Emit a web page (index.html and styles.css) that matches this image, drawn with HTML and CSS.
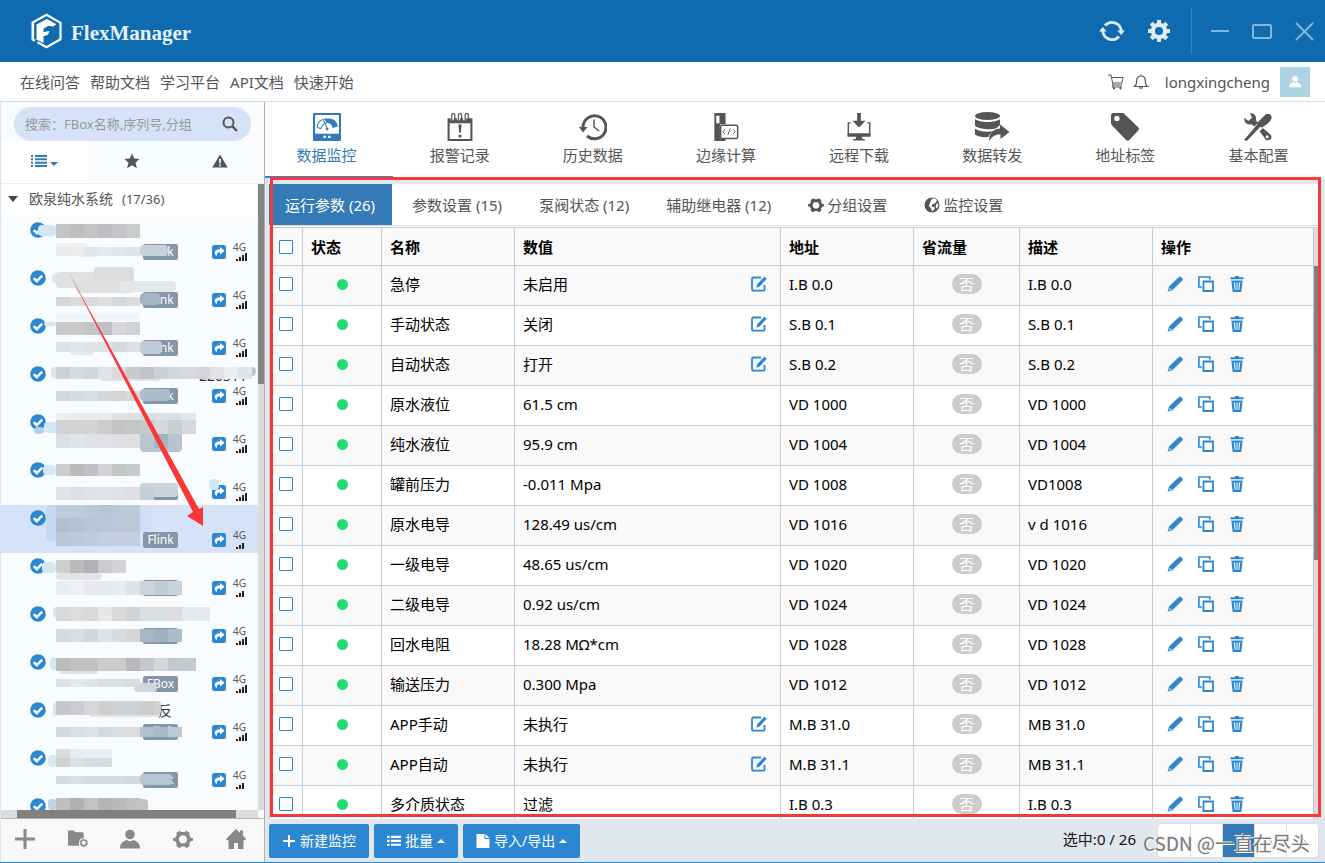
FILE: index.html
```
<!DOCTYPE html>
<html lang="zh-CN">
<head>
<meta charset="UTF-8">
<meta name="viewport" content="width=device-width, initial-scale=1.0">
<title>FlexManager</title>
<link rel="stylesheet" href="styles.css">
</head>
<body>

<!-- icon set -->
<svg class="sprite" aria-hidden="true">
  <symbol id="i-gear" viewBox="0 0 24 24"><path fill-rule="evenodd" d="M10 1h4v3l2 .8 2.300-2.100 2.900 2.900L19.200 8l.8 2h3v4h-3l-.8 2 2 2.300-2.900 2.900L16 19.200l-2 .8v3h-4v-3l-2-.8-2.300 2-2.900-2.900L4.800 16 4 14H1v-4h3l.8-2-2-2.400 2.900-2.900L8 4.800l2-.8zM12 8a4 4 0 1 0 0 8 4 4 0 0 0 0-8z"/></symbol>
  <symbol id="i-gear6" viewBox="0 0 24 24"><path fill-rule="evenodd" d="M8 2l2 1.500h4L16 2l4 2.500-.5 2.800 1.800 3.200L24 11v3l-2.700.8-1.800 3 .5 2.700-4 2.500-2-2h-4l-2 2-4-2.500.5-2.700-1.800-3L0 14v-3l2.700-.5 1.800-3.200L4 4.500zM12 7.500a5 5 0 1 0 0 10 5 5 0 0 0 0-10z"/></symbol>
  <symbol id="i-refresh" viewBox="0 0 26 24"><g fill="none" stroke="currentColor" stroke-width="2.800"><path d="M6 6.500A9.300 9.300 0 0 1 22.200 12"/><path d="M20 17.500A9.300 9.300 0 0 1 3.800 12"/></g><path d="M18.300 11.500H26L22.200 16zM0 12.500h7.700L3.800 8z"/></symbol>
  <symbol id="i-cart" viewBox="0 0 18 18"><path fill="none" stroke="currentColor" d="M1 2h3l2 10h9M4.500 4.500H16L15 10H6M6 12l-1 2h10"/><path fill="none" stroke="currentColor" d="M6.500 14.500h1v1.500h-1zM13 14.500h1v1.500h-1z"/></symbol>
  <symbol id="i-bell" viewBox="0 0 18 18"><path fill="none" stroke="currentColor" stroke-width="1.200" d="M2.500 13.500h13c-1.500-1.200-2.300-2.500-2.300-6.500 0-2.500-1.700-4-4.200-4S4.800 4.500 4.800 7c0 4-.8 5.300-2.300 6.500zM7.500 13.500c0 2.500 3 2.500 3 0M9 3V1.500"/></symbol>
  <symbol id="i-user" viewBox="0 0 20 20"><circle cx="10" cy="5.500" r="4.800"/><path d="M0 19.500c0-5 2-6.500 6.500-8.500 2 1.500 5 1.500 7 0 4.500 2 6.500 3.500 6.500 8.500z"/></symbol>
  <symbol id="i-search" viewBox="0 0 16 16"><circle cx="6.500" cy="6.500" r="5" fill="none" stroke="currentColor" stroke-width="2"/><path stroke="currentColor" stroke-width="2.400" d="M10 10l5 5"/></symbol>
  <symbol id="i-list" viewBox="0 0 16 12"><path d="M0 0h2v2H0zM4 0h12v2H4zM0 3.300h2v2H0zM4 3.300h12v2H4zM0 6.700h2v2H0zM4 6.700h12v2H4zM0 10h2v2H0zM4 10h12v2H4z"/></symbol>
  <symbol id="i-list3" viewBox="0 0 16 12"><path d="M0 0h3v2.500H0zM4.500 0H16v2.500H4.500zM0 4.500h3V7H0zM4.500 4.500H16V7H4.500zM0 9h3v2.500H0zM4.500 9H16v2.500H4.500z"/></symbol>
  <symbol id="i-star" viewBox="0 0 16 16"><path d="M8 .5l2.200 5 5.500.4-4.200 3.700 1.400 5.600L8 12.200l-4.900 3 1.400-5.600L.3 5.900l5.500-.4z"/></symbol>
  <symbol id="i-warn" viewBox="0 0 16 14"><path fill-rule="evenodd" d="M8 .5L15.700 13.500H.3zM7 5l.3 4.500h1.400L9 5zM7.200 10.500v1.700h1.600v-1.700z"/></symbol>
  <symbol id="i-meter" viewBox="0 0 27 27"><path fill-rule="evenodd" d="M1 0h25a1 1 0 0 1 1 1v25a1 1 0 0 1-1 1H1a1 1 0 0 1-1-1V1a1 1 0 0 1 1-1zM2 2v18h23V2zM10 22v2h2.500v-2zM14.500 22v2H17v-2z"/><path d="M11 6c7-2 12 1 13 7l-5 1.500c-1-3.500-3-5-6-5z"/><path fill="none" stroke="currentColor" d="M4 14c0-5 4-8.500 9-8.500M4 14l3.500 1c1-3 3-5 6-5.500M10 7l3.800 8"/><circle cx="13.700" cy="15.500" r="1.300"/></symbol>
  <symbol id="i-alarm" viewBox="0 0 24 27"><path fill-rule="evenodd" d="M0 5h3v2h3V5h3v2h3V5h3v2h3V5h6v22H0zM2 10v15h20V10z"/><path fill="none" stroke="currentColor" stroke-width="1.200" d="M4 7V2c0-2 3-2 3 0v5M10.500 7V2c0-2 3-2 3 0v5M17 7V2c0-2 3-2 3 0v5"/><path d="M10.500 11h3l-.7 8h-1.600zM10.700 21h2.600v2.600h-2.600z"/></symbol>
  <symbol id="i-history" viewBox="0 0 28 28"><path fill="none" stroke="currentColor" stroke-width="3" d="M4 14A11.500 11.500 0 1 1 8 23"/><path d="M0 14h8.500L4 19.500z"/><path fill="none" stroke="currentColor" stroke-width="1.500" d="M15 6.500V14l5 4"/></symbol>
  <symbol id="i-edge" viewBox="0 0 27 30"><path fill-rule="evenodd" d="M1 0h12v12h-6v15h6v3H1zM3 3v8h3.500V3z"/><rect x="7.700" y="13.200" width="18.300" height="14" rx="1.500" fill="none" stroke="currentColor" stroke-width="1.600"/><path fill="none" stroke="currentColor" d="M12.500 17.500L10 20l2.500 2.500M21 17.500l2.500 2.500-2.500 2.500M18 16.500L15.500 23.500"/></symbol>
  <symbol id="i-download" viewBox="0 0 22 27"><path d="M9.200 0h3.600v7.500h4.500L11 14 4.700 7.500h4.500zM0 19.500h22V23H0zM8 23h6v2h2.500v1.500h-11V25H8z"/><path fill="none" stroke="currentColor" stroke-width="1.400" d="M3 9.500H.7V22M19 9.500h2.300V22"/></symbol>
  <symbol id="i-forward" viewBox="0 0 35 30"><ellipse cx="13" cy="4" rx="12.500" ry="4"/><path d="M.5 7c4 4 21 4 25 0v6l-4 3.500C15 18 5 17 .5 14zM.5 16.500c4 3 11 4 18 2.800-2.500 2-4 3.500-4.500 5.700C8 25.500 3 24.500.5 22.500z"/><path d="M25.500 12.500L35 20l-9 7v-4.500c-5-.5-8.500 2-11.500 6.500C14.500 22 18 17 25.500 16.500z"/></symbol>
  <symbol id="i-tag" viewBox="0 0 26 26"><path fill-rule="evenodd" d="M0 2Q0 0 2 0h9.500l14 13.500q1 1.200 0 2.500L17 25q-1.500 1.500-3 0L1 11.500Q0 10.500 0 9zM5.500 2.500a2.500 2.500 0 1 0 0 5 2.500 2.500 0 0 0 0-5z"/></symbol>
  <symbol id="i-tools" viewBox="0 0 26 26"><path d="M5.500 0c4 0 6.500 3 5.500 7l2 2-3.500 3.500-2.500-2C3 11.500 0 9 .3 4.500L4 7.500l3.500-3z"/><path d="M20 1.500c2-2 6.500 0 5.500 3.500-1.500 4-5 5.500-8.500 8.500L15 13 2.500 26 0 25 12 11l.3-2z"/><path d="M14.500 17l3-3 7.500 6.500c2 3-1.500 6-4.500 4.500z"/><circle cx="21.500" cy="22" r="1.400" fill="#fff"/></symbol>
  <symbol id="i-globe" viewBox="0 0 16 16"><circle cx="8" cy="8" r="7.500"/><path fill="#fff" d="M8 1.800l3-.3 2 2.500-1.500 1.500-1.500 1.500-2 .5-.5 2 2.500.5 1 1.500-2.500 3-1.500-3L5 9l1-3.500zM12 7.500l2-1.500.3 2.500-1.300 3-1.300-1z"/></symbol>
  <symbol id="i-edit" viewBox="0 0 16 16"><path fill="none" stroke="currentColor" stroke-width="1.800" d="M10 1.500H2.500a1.500 1.500 0 0 0-1.500 1.500v10.600a1 1 0 0 0 1 1h10.500a1 1 0 0 0 1-1V9"/><path d="M13.500 .8l2.300 2-7.200 7.600-3.300 1.300 1-3.600z"/></symbol>
  <symbol id="i-pencil" viewBox="0 0 16 16"><path fill-rule="evenodd" d="M12 1q1-1 2 0l1.500 1.500q.8.900 0 1.700L5.500 14 .5 15.700 2 10.500zM3 12l-1 2.300 2.200-.9z"/></symbol>
  <symbol id="i-copy" viewBox="0 0 16 16"><path fill="none" stroke="currentColor" stroke-width="1.800" d="M5.500 5.500h9.500v9.500H5.500z"/><path fill="none" stroke="currentColor" stroke-width="1.600" d="M3.800 11H.9V1h11v2.600"/></symbol>
  <symbol id="i-trash" viewBox="0 0 14 16"><path fill-rule="evenodd" d="M5 0h4v1.300h4.500v2H.5v-2H5zM1.300 4.500h11.400L11.300 16H2.700zM3.700 6.500l1 7.500h.8L5 6.500zM6.500 6.500V14h1V6.500zM9 6.500L8.500 14h.8l1-7.500z"/></symbol>
  <symbol id="i-check" viewBox="0 0 16 16"><circle cx="8" cy="8" r="7.800"/><path fill="none" stroke="#fff" stroke-width="2.400" d="M3.800 8.200l3 3 5.400-5.600"/></symbol>
  <symbol id="i-share" viewBox="0 0 14 14"><rect width="14" height="14" rx="2.500"/><path fill="#fff" d="M8 2L12.700 5.800 8 9.600V7.300C5.500 7.300 4.500 8.500 4.800 11.500 1.300 8.300 2 4.500 8 4.300z"/></symbol>
  <symbol id="i-plus" viewBox="0 0 20 20"><path d="M8.500 0h3v8.500H20v3h-8.500V20h-3v-8.500H0v-3h8.500z"/></symbol>
  <symbol id="i-plus-thin" viewBox="0 0 14 14"><path d="M6 1h2v5h5v2H8v5H6V8H1V6h5z"/></symbol>
  <symbol id="i-folder" viewBox="0 0 21 18"><path d="M0 1q0-1 1-1h5l2 2h7q1.500 0 1.500 1.500V8q-5 0-5 5v3H1q-1 0-1-1z"/><circle cx="16.500" cy="13" r="3" fill="none" stroke="currentColor" stroke-width="1.500"/><circle cx="16.500" cy="13" r="3.900" fill="none" stroke="currentColor" stroke-width="1" stroke-dasharray="2 2.080"/></symbol>
  <symbol id="i-home" viewBox="0 0 20 20"><path d="M10 0l4 3.700V1.500h3v5L20 10l-1 1.200h-1.500V20H12v-6H8v6H2.500v-8.800H1L0 10z"/></symbol>
  <symbol id="i-file" viewBox="0 0 13 14"><path d="M0 0h8v5h5v9H0zM9 0l4 4H9z"/></symbol>
  <symbol id="i-logo" viewBox="0 0 32 36"><path fill="none" stroke="currentColor" stroke-width="2.200" d="M2.200 9.500L16 1.800l14 8v16.500L16 34.300 7 29.300"/><path fill="none" stroke="currentColor" stroke-width="2.600" d="M2.300 8.800v17.700l2.200 1.200"/><path d="M6 11.500L16.500 6l9.500 5.300-3.500 2.200-4.500-.8-5 3v3.500l6-1.500-1.500 4-4.500 1.500V30L6 26.500z"/></symbol>
</svg>

<header class="titlebar">
  <svg class="logo"><use href="#i-logo"/></svg>
  <span class="brand">FlexManager</span>
  <div class="window-tools">
    <button class="tool" aria-label="刷新"><svg class="icon-refresh"><use href="#i-refresh"/></svg></button>
    <button class="tool" aria-label="设置"><svg class="icon-24"><use href="#i-gear"/></svg></button>
    <span class="divider"></span>
    <button class="win" aria-label="最小化"><svg viewBox="0 0 20 20"><path d="M1 10h18"/></svg></button>
    <button class="win" aria-label="最大化"><svg viewBox="0 0 20 20"><rect x="1" y="4" width="18" height="13" rx="1"/></svg></button>
    <button class="win" aria-label="关闭"><svg viewBox="0 0 20 20"><path d="M2 2l17 17M19 2L2 19"/></svg></button>
  </div>
</header>

<nav class="topnav">
  <a href="#">在线问答</a>
  <a href="#">帮助文档</a>
  <a href="#">学习平台</a>
  <a href="#">API文档</a>
  <a href="#">快速开始</a>
  <div class="account">
    <svg class="icon-18"><use href="#i-cart"/></svg>
    <svg class="icon-18"><use href="#i-bell"/></svg>
    <span class="username">longxingcheng</span>
    <span class="avatar"><svg><use href="#i-user"/></svg></span>
  </div>
</nav>

<div class="workspace">
  <aside class="sidebar">
    <div class="search">
      <input class="search-input" type="text" aria-label="搜索" placeholder="搜索：FBox名称,序列号,分组">
      <svg class="icon-16"><use href="#i-search"/></svg>
    </div>
    <div class="side-tabs">
      <button class="side-tab active" aria-label="列表"><svg class="icon-list"><use href="#i-list"/></svg><span class="caret-down"></span></button>
      <button class="side-tab" aria-label="收藏"><svg class="icon-16"><use href="#i-star"/></svg></button>
      <button class="side-tab" aria-label="报警"><svg class="icon-16"><use href="#i-warn"/></svg></button>
    </div>
    <div class="tree">
      <div class="tree-list">
        <div class="group"><span class="group-arrow"></span>欧泉纯水系统<span class="count">(17/36)</span></div>
        <div id="devices"></div>
      </div>
      <div class="v-track"><div class="v-thumb"></div></div>
    </div>
    <div class="h-track"><div class="h-thumb"></div></div>
    <div class="side-foot">
      <button aria-label="添加"><svg><use href="#i-plus"/></svg></button>
      <button aria-label="分组"><svg><use href="#i-folder"/></svg></button>
      <button aria-label="用户"><svg><use href="#i-user"/></svg></button>
      <button aria-label="设置"><svg><use href="#i-gear6"/></svg></button>
      <button aria-label="主页"><svg><use href="#i-home"/></svg></button>
    </div>
  </aside>

  <main class="main">
    <div class="modules">
      <a class="module active" href="#"><svg><use href="#i-meter"/></svg>数据监控</a>
      <a class="module" href="#"><svg><use href="#i-alarm"/></svg>报警记录</a>
      <a class="module" href="#"><svg><use href="#i-history"/></svg>历史数据</a>
      <a class="module" href="#"><svg><use href="#i-edge"/></svg>边缘计算</a>
      <a class="module" href="#"><svg><use href="#i-download"/></svg>远程下载</a>
      <a class="module wide" href="#"><svg><use href="#i-forward"/></svg>数据转发</a>
      <a class="module" href="#"><svg><use href="#i-tag"/></svg>地址标签</a>
      <a class="module" href="#"><svg><use href="#i-tools"/></svg>基本配置</a>
    </div>

    <div class="panel">
      <div class="groups">
        <button class="tab active">运行参数 (26)</button>
        <button class="tab">参数设置 (15)</button>
        <button class="tab">泵阀状态 (12)</button>
        <button class="tab">辅助继电器 (12)</button>
        <button class="tab"><svg class="icon-16"><use href="#i-gear6"/></svg>分组设置</button>
        <button class="tab"><svg class="icon-16"><use href="#i-globe"/></svg>监控设置</button>
      </div>
      <div class="grid">
        <div class="grid-view">
          <table class="data">
            <colgroup>
              <col class="c-check"><col class="c-state"><col class="c-name"><col class="c-value">
              <col class="c-addr"><col class="c-flow"><col class="c-desc"><col>
            </colgroup>
            <thead>
              <tr>
                <th class="check"><input type="checkbox" aria-label="全选"></th>
                <th>状态</th><th>名称</th><th>数值</th><th>地址</th><th>省流量</th><th>描述</th><th>操作</th>
              </tr>
            </thead>
            <tbody id="rows"></tbody>
          </table>
        </div>
        <div class="grid-track"><div class="grid-thumb"></div></div>
      </div>
    </div>

    <div class="footbar">
      <button class="btn"><svg class="icon-14"><use href="#i-plus-thin"/></svg>新建监控</button>
      <button class="btn"><svg class="icon-14"><use href="#i-list3"/></svg>批量<span class="caret-up"></span></button>
      <button class="btn"><svg class="icon-14"><use href="#i-file"/></svg>导入/导出<span class="caret-up"></span></button>
      <span class="picked">选中:0 / 26</span>
      <div class="pager">
        <button aria-label="首页"></button>
        <button aria-label="上一页"></button>
        <button class="on" aria-label="第一页"></button>
        <button aria-label="下一页"><svg viewBox="0 0 8 8"><path d="M2 1l3 3-3 3"/></svg></button>
        <button aria-label="末页"><svg viewBox="0 0 8 8"><path d="M1 1l3 3-3 3M4 1l3 3-3 3"/></svg></button>
      </div>
    </div>
  </main>
</div>

<!-- annotations on top of the window -->
<div class="mark-box"></div>
<svg class="mark-arrow" viewBox="0 0 140 260"><path d="M1 0L132 238 136 236 136 255 120 245 126 241z"/></svg>
<div class="watermark">CSDN @一直在尽头</div>

<script src="app.js"></script>
</body>
</html>
```
FILE: styles.css
```
* {
  box-sizing: border-box;
}
body {
  margin: 0;
  height: 100vh;
  display: flex;
  flex-direction: column;
  position: relative;
  overflow: hidden;
  background: #fff;
  border-bottom: 1px solid #2b87d1;
  font-family: "Noto Sans", "Noto Sans CJK SC", sans-serif;
  font-size: 15px;
  line-height: 20px;
  color: #555;
}
button, input {
  font: inherit;
  color: inherit;
}
button {
  border: 0;
  padding: 0;
  margin: 0;
  background: none;
}
a {
  color: inherit;
  text-decoration: none;
}
svg {
  fill: currentColor;
  flex: none;
}
.sprite {
  position: absolute;
  width: 0;
  height: 0;
}
.icon-14 { width: 14px; height: 14px; }
.icon-16 { width: 16px; height: 16px; }
.icon-18 { width: 18px; height: 18px; }
.icon-24 { width: 24px; height: 24px; }
.icon-refresh { width: 26px; height: 24px; }
.icon-list { width: 16px; height: 12px; }

/* title bar */
.titlebar {
  flex: none;
  height: 62px;
  padding: 0 11px 0 30px;
  display: flex;
  align-items: center;
  background: #0e6baf;
  color: #fff;
}
.logo {
  width: 33px;
  height: 36px;
}
.brand {
  margin-left: 8px;
  padding-top: 4px;
  font: bold 21px "Liberation Serif", serif;
  color: #e6f0f8;
}
.window-tools {
  margin-left: auto;
  display: flex;
  align-items: center;
  color: #e1e9f1;
}
.tool {
  display: flex;
  margin-right: 22px;
}
.divider {
  width: 1px;
  height: 46px;
  margin: 0 18px 0 -2px;
  background: #2b87c8;
}
.win {
  display: flex;
  margin-left: 22px;
}
.divider + .win {
  margin-left: 0;
}
.win svg {
  width: 20px;
  height: 20px;
  fill: none;
  stroke: #86b5d7;
  stroke-width: 2;
}

/* links under the title */
.topnav {
  flex: none;
  height: 40px;
  padding: 0 15px 0 20px;
  display: flex;
  align-items: center;
  gap: 10px;
  border-bottom: 1px solid #d9dcdf;
}
.account {
  margin-left: auto;
  display: flex;
  align-items: center;
  gap: 7px;
}
.username {
  margin: 0 3px 0 8px;
}
.avatar {
  width: 30px;
  height: 30px;
  display: flex;
  align-items: center;
  justify-content: center;
  background: #add4e2;
  color: #fff;
}
.avatar svg {
  width: 12px;
  height: 13px;
}

.workspace {
  flex: 1;
  min-height: 0;
  display: flex;
}

/* sidebar */
.sidebar {
  flex: none;
  width: 265px;
  display: flex;
  flex-direction: column;
  background: #f9fcff;
  border-right: 1px solid #b0b0b0;
  border-left: 1px solid #d9e7f5;
  position: relative;
  z-index: 1;
}
.search {
  flex: none;
  height: 34px;
  margin: 5px 13px 0;
  padding: 0 13px 0 11px;
  display: flex;
  align-items: center;
  border-radius: 17px;
  background: #d5e2f8;
}
.search-input {
  flex: 1;
  min-width: 0;
  padding: 0;
  border: 0;
  outline: 0;
  background: none;
  font-size: 13px;
}
.search-input::placeholder {
  color: #999;
}
.side-tabs {
  flex: none;
  height: 43px;
  display: flex;
  border-bottom: 1px solid #e8edf1;
}
.side-tab {
  flex: 1;
  display: flex;
  align-items: center;
  justify-content: center;
  gap: 3px;
  padding: 0 1px 2px 0;
}
.side-tab.active {
  background: #fff;
  color: #337ab7;
}
.caret-down {
  margin-top: 5px;
  border: 4px solid transparent;
  border-top-color: currentColor;
  border-bottom: 0;
}
.tree {
  flex: 1;
  min-height: 0;
  display: flex;
}
.tree-list {
  flex: 1;
  min-width: 0;
  overflow: hidden;
}
.group {
  height: 33px;
  padding: 0 0 3px 7px;
  display: flex;
  align-items: center;
  background: #fff;
  font-size: 14px;
}
.group-arrow {
  margin-right: 11px;
  border: 5px solid transparent;
  border-top: 6px solid #444;
  border-bottom: 0;
}
.count {
  margin-left: 9px;
  font-size: 13px;
}
.v-track {
  width: 6px;
  background: #dcdcdc;
}
.v-thumb {
  height: 200px;
  background: #848484;
}
.h-track {
  flex: none;
  height: 8px;
  margin-right: 6px;
  padding: 0 22px 0 16px;
  background: #dcdcdc;
}
.h-thumb {
  height: 8px;
  background: #808080;
}
.side-foot {
  flex: none;
  height: 44px;
  display: flex;
  border-top: 1px solid #b5b5b5;
  background: #f8f8f8;
  color: #888;
}
.side-foot button {
  flex: 1;
  display: flex;
  align-items: center;
  justify-content: center;
  padding: 0 4px 3px 0;
}
.side-foot svg {
  width: 20px;
  height: 20px;
}

/* device list */
.device {
  height: 48px;
  position: relative;
  padding: 5px 11px 0 29px;
  display: flex;
}
.device.current {
  background: #d5e2f8;
}
.device .ok {
  width: 16px;
  height: 16px;
  color: #2b87d1;
}
.device .link {
  display: flex;
  align-items: center;
  align-self: flex-end;
  height: 26px;
  margin-left: auto;
}
.badge {
  width: 35px;
  height: 16px;
  margin-right: 34px;
  border-radius: 2px;
  background: #8496a8;
  color: #fff;
  font-size: 12px;
  line-height: 16px;
  text-align: center;
}
.link .share {
  width: 14px;
  height: 14px;
  color: #2b87d1;
}
.signal {
  width: 14px;
  margin-left: 7px;
  font-size: 10px;
  line-height: 11px;
}
.signal svg {
  display: block;
  width: 14px;
  height: 9px;
  color: #222;
}
.mosaic {
  position: absolute;
  left: 0;
  top: 0;
  width: 257px;
  height: 48px;
}

/* main part */
.main {
  flex: 1;
  min-width: 0;
  display: flex;
  flex-direction: column;
  background: #e1e7ef;
}
.modules {
  flex: none;
  height: 76px;
  margin-left: -5px;
  display: flex;
  background: #fff;
}
.module {
  flex: 1;
  display: flex;
  flex-direction: column;
  align-items: center;
  gap: 3px;
  padding-top: 10px;
  border-bottom: 2px solid transparent;
}
.module svg {
  width: 30px;
  height: 30px;
  padding: 1px;
}
.module.wide svg {
  width: 36px;
  padding: 0;
}
.module.active {
  color: #337ab7;
  border-bottom-color: #2b87d1;
}
.panel {
  flex: 1;
  min-height: 0;
  margin: 6px 6px 0 4px;
  display: flex;
  flex-direction: column;
  background: #fff;
}
.groups {
  flex: none;
  height: 42px;
  display: flex;
  gap: 4px;
  border-bottom: 1px solid #ddd;
}
.tab {
  display: flex;
  align-items: center;
  gap: 3px;
  padding: 0 17px 0 16px;
}
.tab.active {
  background: #337ab7;
  color: #fff;
}
.grid {
  flex: 1;
  min-height: 0;
  margin-top: 1px;
  display: flex;
}
.grid-view {
  flex: 1;
  min-width: 0;
  overflow: hidden;
}
.grid-track {
  width: 5px;
  padding-top: 39px;
  background: #dcdcdc;
}
.grid-thumb {
  height: 294px;
  background: #808080;
}
.data {
  width: 100%;
  table-layout: fixed;
  border-collapse: collapse;
  color: #000;
}
.c-check { width: 33px; }
.c-state { width: 79px; }
.c-name, .c-addr, .c-desc { width: 133px; }
.c-value { width: 266px; }
.c-flow { width: 106px; }
.data th, .data td {
  height: 40px;
  padding: 0 8px;
  border: 1px solid #c0cddb;
  text-align: left;
}
.data td {
  padding-bottom: 3px;
}
.data th {
  height: 38px;
  background: #f9f9f9;
}
.data tbody tr:nth-child(odd) {
  background: #f9f9f9;
}
.data .check {
  padding-left: 9px;
  padding-right: 0;
}
.check input {
  appearance: none;
  display: block;
  width: 14px;
  height: 14px;
  margin: 0;
  border: 1px solid #2b87d1;
  border-radius: 1px;
  background: #fff;
}
.dot {
  display: block;
  width: 11px;
  height: 11px;
  margin: 0 auto;
  border-radius: 50%;
  background: #24dc74;
}
.value {
  display: flex;
  align-items: center;
  justify-content: space-between;
  padding-right: 5px;
}
.value button, .ops button {
  display: flex;
  color: #2b87d1;
}
.no {
  display: block;
  width: 30px;
  height: 20px;
  margin: 0 auto;
  border-radius: 10px;
  background: #ccc;
  color: #fff;
  text-align: center;
}
.ops {
  display: flex;
  gap: 15px;
  padding-left: 6px;
}

/* bottom bar */
.footbar {
  flex: none;
  height: 43px;
  padding: 0 6px 0 4px;
  display: flex;
  align-items: center;
  gap: 5px;
  font-size: 14px;
}
.btn {
  height: 34px;
  padding: 0 13px;
  display: flex;
  align-items: center;
  gap: 4px;
  border-radius: 2px;
  background: #2b87d1;
  color: #fff;
}
.caret-up {
  border: 4px solid transparent;
  border-bottom-color: currentColor;
  border-top: 0;
}
.picked {
  margin-left: auto;
  margin-right: 16px;
  padding-bottom: 4px;
  font-size: 15px;
  color: #111;
}
.pager {
  display: flex;
  height: 35px;
  border: 1px solid #ddd;
  border-radius: 4px;
  background: #fff;
  overflow: hidden;
}
.pager button {
  width: 32px;
  border-left: 1px solid #ddd;
}
.pager button:first-child {
  border-left: 0;
}
.pager .on {
  background: #337ab7;
}
.pager svg {
  width: 8px;
  height: 8px;
  fill: none;
  stroke: #aaa;
}

/* annotations */
.mark-box {
  position: absolute;
  left: 270px;
  right: 4px;
  top: 177px;
  bottom: 45px;
  border: 3px solid #fa3737;
  z-index: 2;
}
.mark-arrow {
  position: absolute;
  left: 67px;
  top: 271px;
  width: 140px;
  height: 260px;
  color: #fa3737;
  z-index: 2;
}
.watermark {
  position: absolute;
  right: 15px;
  bottom: 4px;
  font-family: "Noto Sans CJK SC", sans-serif;
  font-size: 19px;
  line-height: 30px;
  color: #77797c;
  text-shadow: 1px 1px 0 #fff, -1px -1px 0 #e8e8e8;
  z-index: 3;
}
```
FILE: app.js
```
// name, value, address, description, writable
var rows = [
  ['急停', '未启用', 'I.B 0.0', 'I.B 0.0', true],
  ['手动状态', '关闭', 'S.B 0.1', 'S.B 0.1', true],
  ['自动状态', '打开', 'S.B 0.2', 'S.B 0.2', true],
  ['原水液位', '61.5 cm', 'VD 1000', 'VD 1000', false],
  ['纯水液位', '95.9 cm', 'VD 1004', 'VD 1004', false],
  ['罐前压力', '-0.011 Mpa', 'VD 1008', 'VD1008', false],
  ['原水电导', '128.49 us/cm', 'VD 1016', 'v d 1016', false],
  ['一级电导', '48.65 us/cm', 'VD 1020', 'VD 1020', false],
  ['二级电导', '0.92 us/cm', 'VD 1024', 'VD 1024', false],
  ['回水电阻', '18.28 MΩ*cm', 'VD 1028', 'VD 1028', false],
  ['输送压力', '0.300 Mpa', 'VD 1012', 'VD 1012', false],
  ['APP手动', '未执行', 'M.B 31.0', 'MB 31.0', true],
  ['APP自动', '未执行', 'M.B 31.1', 'MB 31.1', true],
  ['多介质状态', '过滤', 'I.B 0.3', 'I.B 0.3', false]
];

// bars: signal level, strips: [x, y, height, colours of the 14px blocks], smears: [x, y, w, h, colour]
var devices = [
  { type: 'Flink', bars: 4, strips: [[56, 7, 14, 'c5c5c7 bcbec0 c6c2c6 bfbcc3 c8c3c8 cbcdcd'], [56, 30, 9, 'e8eaec ebecee e3e6e9 e6e8ea e5e7e9 e2e5e8']],
    smears: [[38, 8, 18, 11, 'd3e7f5'], [56, 26, 32, 12, 'eef0f2'], [76, 32, 24, 8, 'e7eaec'], [140, 28, 28, 11, 'c5d2dc']] },
  { type: 'Flink', bars: 4, strips: [[56, 32, 9, 'd5d6d8 dadbdd d8dadc dee0e2 d5d8da dadcde']],
    smears: [[52, 8, 30, 10, 'dce9f3'], [56, 7, 60, 16, 'dfe1e2'], [94, 2, 40, 16, 'dadcdd'], [76, 16, 58, 12, 'dddfe1'], [120, 16, 56, 11, 'e5e8ea'], [140, 28, 20, 12, 'a5b5c3']] },
  { type: 'Flink', bars: 4, strips: [[56, 9, 13, 'c8c9cb c9cacb c2c4c7 bfc0c3 d6d7dc d0d2d6'], [56, 29, 10, 'dfe1e4 e4e6e8 e1e4e6 dfe2e5 d7dadd dddfe2']],
    smears: [[44, 9, 12, 4, 'd3e7f5'], [56, 0, 84, 8, 'f2f5f7'], [70, 34, 24, 8, 'e7eaec'], [140, 28, 22, 13, 'bfccd7']] },
  { type: 'Flink', bars: 4, name: '220311', strips: [[56, 6, 12, 'cfd1d4 d9dbdf d4d6da e1e3e5 d9dbde c8cacc bfc4ca ccd0d4 d4d7da d7d9dc d3d5d9 e1e3e7 ebecef e2e3e7'], [56, 30, 10, 'd5d7d9 dadbdd dbdddf d4d6d8 d3d5d7 d7d9dc']],
    smears: [[51, 6, 8, 11, 'd3e7f5'], [248, 6, 8, 9, 'c3c4c5'], [100, 16, 60, 4, 'dfe4e8'], [140, 28, 30, 12, 'adbdca']] },
  { type: 'Flink', bars: 4, strips: [[56, 4, 8, 'eceff0 e8eaec e7eaee e8ebed dfe1e4 dde0e2 dadde0 dde0e2 dde0e2 e4e6e8'], [56, 11, 14, 'd0d2d4 d3d3d2 d2d4d5 cbcdcf c2c3c4 c4c7c7 c7c9cb d5d9dd cbcdcf d5d8dc'], [56, 25, 14, 'dddfe3 e2e5e8 dfe2e5 e0e2e5 dedfe2 dedfe2 b8c6d0 a4b4c2 b6c4cf']],
    smears: [[34, 18, 10, 7, 'b3d1ec'], [44, 13, 14, 11, 'd3e7f5'], [140, 25, 42, 18, 'b6c4cf']] },
  { type: 'Flink', bars: 4, strips: [[56, 7, 12, 'cccdcf babbbd bfc1c4 d2d3d5 c3c6c7 c8cacb'], [56, 30, 13, 'e2e4e6 dddfe2 e0e2e5 e2e4e7 dfe1e4 dcdee1 c2ced8']],
    smears: [[43, 8, 13, 10, 'd3e7f5'], [140, 26, 38, 14, 'c7d3dd'], [209, 22, 10, 11, 'd3e7f5']] },
  { type: 'Flink', bars: 3, current: true, strips: [[56, 0, 13, 'bfcbdc bfcada bcc8da b9c4d6 bcc8d9 becad9'], [56, 13, 14, 'b1bfd2 b5c2d5 b8c5d8 bac6d9 bcc7da bcc7d9'], [56, 27, 14, 'bbc6d6 bdc9da bfcbdc c2cddd c4cee0 c4cee0']],
    smears: [[46, 0, 12, 36, 'c5daf1'], [138, 0, 14, 27, 'cfdef6']] },
  { type: 'Flink', bars: 3, strips: [[56, 7, 13, 'cfcfcf bdbcbd b2b1b6 cbcbcf d3d4d7'], [56, 28, 14, 'eaecee edf0f1 e7e9ec e6e9eb e9ebee e0e3e5 cad5de c0cdd6 c6d3dd']],
    smears: [[42, 9, 14, 11, 'd3e7f5'], [56, 20, 46, 7, 'e1e3e6']] },
  { type: 'Flink', bars: 4, strips: [[56, 6, 14, 'd7d9db dbdcde d8dadc e5e7e9 d8dadb d1d4d7 dadee0 d6dfe3 dadcdf e6e9eb e6e9eb'], [56, 28, 13, 'd8dadc dbdddf d4d6d9 dfe2e6 d9dbde d4d7da a7b7c4 a0b0bf adbecb']],
    smears: [[53, 6, 6, 11, 'd8e6f2']] },
  { type: 'FBox', bars: 4, strips: [[56, 9, 13, 'babcbc c2c3c1 c1c2bf cacbcb c9cbcd b9b8ba c3c9cc d2d7d8 c5c8ca c7cacb'], [56, 30, 8, 'dfe2e5 e6e8ea e1e4e6 dddfe2 dedfe2 d9dde0']],
    smears: [[50, 8, 7, 13, 'd3e7f5'], [60, 21, 38, 4, 'dfe2e5'], [134, 34, 23, 9, 'cdd8e1']] },
  { type: 'Flink', bars: 4, name: '反', strips: [[56, 4, 14, 'c6c7ca ccccd0 d5d7da d0cfce cfd1d3 cfd2d5 cecccc'], [56, 30, 10, 'd6d8da dcdee1 dfe1e4 d7dadd dadcdf d9dce0 b0c1cf a8bbc8 bccbd6']],
    smears: [[53, 5, 5, 14, 'd3e7f5'], [140, 4, 21, 14, 'd0d1d3'], [90, 18, 70, 2, 'dfe4e8']] },
  { type: 'Flink', bars: 3, strips: [[56, 4, 10, 'd9dcde e9ecef eceff1 eceff2'], [56, 13, 9, 'cfd1d3 dfe1e4 d9dbdd d8dbde'], [56, 31, 8, 'd9dcdf dcdfe1 d9dbde d8dbde d9dcde d5d9dc']],
    smears: [[48, 10, 9, 12, 'd6eaf3'], [140, 29, 32, 11, 'b5c5d2']] },
  { strips: [[56, 5, 12, 'bcbebf afb0b1 c2c3c3 b3b5b5 b9bbba c0c1c0']],
    smears: [[48, 6, 9, 11, 'c2d3e2'], [110, 6, 38, 13, 'c1c3c3']] }
];

function icon(name, cls) {
  return '<svg class="' + cls + '"><use href="#i-' + name + '"/></svg>';
}

function drawMosaic(d) {
  var out = '';
  if (d.name == '反')
    out += '<text x="157" y="19" font-size="14" fill="#333">反</text>';
  else if (d.name)
    out += '<text x="198" y="20" font-size="14" fill="#333">' + d.name + '</text>';
  d.smears.forEach(function (s) {
    out += '<rect x="' + (s[0] - 1) + '" y="' + s[1] + '" width="' + s[2] + '" height="' + s[3] + '" rx="4" fill="#' + s[4] + '"/>';
  });
  d.strips.forEach(function (s) {
    s[3].split(' ').forEach(function (color, i) {
      out += '<rect x="' + (s[0] - 1 + i * 14) + '" y="' + s[1] + '" width="14" height="' + s[2] + '" fill="#' + color + '"/>';
    });
  });
  return '<svg class="mosaic">' + out + '</svg>';
}

function drawBars(n) {
  var out = '';
  for (var i = 0; i < n; i++) {
    var h = [2, 4, 6, 8][i];
    out += '<rect x="' + (3 + i * 3) + '" y="' + (8 - h) + '" width="2" height="' + h + '"/>';
  }
  return '<svg>' + out + '</svg>';
}

function drawLink(d) {
  if (!d.type) return '';
  return '<div class="link"><span class="badge">' + d.type + '</span>' + icon('share', 'share') +
    '<span class="signal">4G' + drawBars(d.bars) + '</span></div>';
}

document.getElementById('devices').innerHTML = devices.map(function (d) {
  return '<div class="device' + (d.current ? ' current' : '') + '">' + icon('check', 'ok') +
    drawLink(d) + drawMosaic(d) + '</div>';
}).join('');

document.getElementById('rows').innerHTML = rows.map(function (r) {
  return '<tr><td class="check"><input type="checkbox" aria-label="' + r[0] + '"></td>' +
    '<td><span class="dot"></span></td><td>' + r[0] + '</td>' +
    '<td><div class="value">' + r[1] + (r[4] ? '<button aria-label="写入">' + icon('edit', 'icon-16') + '</button>' : '') + '</div></td>' +
    '<td>' + r[2] + '</td><td><span class="no">否</span></td><td>' + r[3] + '</td>' +
    '<td><div class="ops"><button aria-label="编辑">' + icon('pencil', 'icon-16') + '</button>' +
    '<button aria-label="复制">' + icon('copy', 'icon-16') + '</button>' +
    '<button aria-label="删除">' + icon('trash', 'icon-16') + '</button></div></td></tr>';
}).join('');
```
